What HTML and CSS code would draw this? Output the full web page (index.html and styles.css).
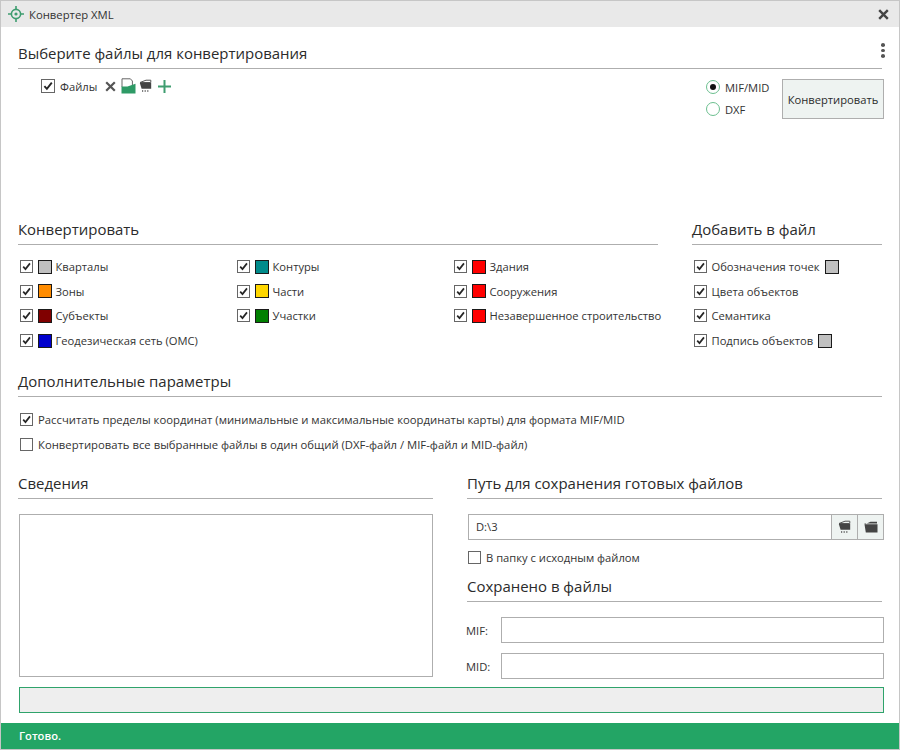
FILE: index.html
```html
<!DOCTYPE html>
<html lang="ru">
<head>
    <meta charset="UTF-8">
    <title>Конвертер XML</title>
    <link rel="stylesheet" href="styles.css">
</head>
<body>
    <svg class="defs" width="0" height="0">
        <symbol id="tick" viewBox="0 0 13 13">
            <path d="M2.6 6.6 5.3 9.6 10.6 2.8" fill="none" stroke="#262626" stroke-width="2"/>
        </symbol>
        <symbol id="folder-net" viewBox="0 0 13 14">
            <path d="M1 3.5 7 1.2 11.8 1.2V3.5Z" fill="none" stroke="#555" stroke-width="1"/>
            <path d="M.8 4H12.2V9.8H2.6Z" fill="#444"/>
            <path d="M3 12H4.2M5.6 12H6.8M8.2 12H9.4" stroke="#555" stroke-width="1.3"/>
        </symbol>
    </svg>

    <div class="window">
        <div class="titlebar">
            <svg class="app-icon" width="18" height="18" viewBox="0 0 18 18">
                <circle cx="9" cy="9" r="4.6" fill="none" stroke="#3f9d70" stroke-width="1.6"/>
                <circle cx="9" cy="9" r="1.6" fill="#3f9d70"/>
                <path d="M9 1V4.4M9 13.6V17M1 9H4.4M13.6 9H17" stroke="#3f9d70" stroke-width="1.6"/>
            </svg>
            <span class="app-title">Конвертер XML</span>
            <svg class="close" width="11" height="11" viewBox="0 0 11 11">
                <path d="M1.2 1.2 9.8 9.8M9.8 1.2 1.2 9.8" stroke="#444" stroke-width="2.4"/>
            </svg>
        </div>

        <div class="content">
            <div class="section-title title-top">
                Выберите файлы для конвертирования
                <span class="dots"><i></i><i></i><i></i></span>
            </div>

            <div class="files">
                <div class="file-tools">
                    <span class="check big"><svg><use href="#tick"/></svg></span>
                    <span class="file-label">Файлы</span>
                    <svg class="tool-x" width="11" height="11" viewBox="0 0 11 11">
                        <path d="M1.2 1.2 9.8 9.8M9.8 1.2 1.2 9.8" stroke="#555" stroke-width="2.2"/>
                    </svg>
                    <svg class="tool-open" width="15" height="16" viewBox="0 0 15 16">
                        <path d="M1 9V.8H9.4L11.4 3V7" fill="none" stroke="#666" stroke-width="1"/>
                        <path d="M.5 8.6H6.5L14.5 5.8V15.5H.5Z" fill="#2e9a66"/>
                    </svg>
                    <svg class="tool-net" width="13" height="14"><use href="#folder-net"/></svg>
                    <svg class="tool-plus" width="13" height="13" viewBox="0 0 13 13">
                        <path d="M6.5 0V13M0 6.5H13" stroke="#3f9d70" stroke-width="2"/>
                    </svg>
                </div>
                <div class="format">
                    <label class="radio-row"><span class="radio on"></span>MIF/MID</label>
                    <label class="radio-row"><span class="radio"></span>DXF</label>
                </div>
                <button type="button" class="btn-convert">Конвертировать</button>
            </div>

            <div class="options">
                <div>
                    <div class="section-title">Конвертировать</div>
                    <div class="layers">
                        <div class="row"><span class="check"><svg><use href="#tick"/></svg></span><span class="swatch gray"></span>Кварталы</div>
                        <div class="row"><span class="check"><svg><use href="#tick"/></svg></span><span class="swatch teal"></span>Контуры</div>
                        <div class="row"><span class="check"><svg><use href="#tick"/></svg></span><span class="swatch red"></span>Здания</div>
                        <div class="row"><span class="check"><svg><use href="#tick"/></svg></span><span class="swatch orange"></span>Зоны</div>
                        <div class="row"><span class="check"><svg><use href="#tick"/></svg></span><span class="swatch yellow"></span>Части</div>
                        <div class="row"><span class="check"><svg><use href="#tick"/></svg></span><span class="swatch red"></span>Сооружения</div>
                        <div class="row"><span class="check"><svg><use href="#tick"/></svg></span><span class="swatch maroon"></span>Субъекты</div>
                        <div class="row"><span class="check"><svg><use href="#tick"/></svg></span><span class="swatch green"></span>Участки</div>
                        <div class="row"><span class="check"><svg><use href="#tick"/></svg></span><span class="swatch red"></span>Незавершенное строительство</div>
                        <div class="row wide"><span class="check"><svg><use href="#tick"/></svg></span><span class="swatch blue"></span>Геодезическая сеть (ОМС)</div>
                    </div>
                </div>
                <div>
                    <div class="section-title">Добавить в файл</div>
                    <div class="extras">
                        <div class="row"><span class="check"><svg><use href="#tick"/></svg></span>Обозначения точек<span class="swatch gray after"></span></div>
                        <div class="row"><span class="check"><svg><use href="#tick"/></svg></span>Цвета объектов</div>
                        <div class="row"><span class="check"><svg><use href="#tick"/></svg></span>Семантика</div>
                        <div class="row"><span class="check"><svg><use href="#tick"/></svg></span>Подпись объектов<span class="swatch gray after"></span></div>
                    </div>
                </div>
            </div>

            <div class="section-title title-extra">Дополнительные параметры</div>
            <div class="params">
                <div class="row"><span class="check"><svg><use href="#tick"/></svg></span>Рассчитать пределы координат (минимальные и максимальные координаты карты) для формата MIF/MID</div>
                <div class="row"><span class="check"></span>Конвертировать все выбранные файлы в один общий (DXF-файл / MIF-файл и MID-файл)</div>
            </div>

            <div class="bottom">
                <div>
                    <div class="section-title">Сведения</div>
                    <div class="info-box"></div>
                </div>
                <div>
                    <div class="section-title">Путь для сохранения готовых файлов</div>
                    <div class="path">
                        <div class="path-value">D:\3</div>
                        <div class="path-btn"><svg width="13" height="14"><use href="#folder-net"/></svg></div>
                        <div class="path-btn">
                            <svg width="14" height="12" viewBox="0 0 14 12">
                                <path d="M.5 3.5 6.5.8H13V2.6H.5ZM.5 3.2H13.5V11.5H1.8Z" fill="#444"/>
                            </svg>
                        </div>
                    </div>
                    <div class="row same-folder"><span class="check"></span>В папку с исходным файлом</div>
                    <div class="section-title title-saved">Сохранено в файлы</div>
                    <div class="saved-row mif"><span class="saved-label">MIF:</span><div class="saved-input"></div></div>
                    <div class="saved-row mid"><span class="saved-label">MID:</span><div class="saved-input"></div></div>
                </div>
            </div>

            <div class="progress"></div>
        </div>

        <div class="status">Готово.</div>
    </div>
</body>
</html>
```

FILE: styles.css
```css
* {
    box-sizing: border-box;
}

body {
    margin: 0;
    background-color: #fff;
    font-family: "Open Sans", "Noto Sans", sans-serif;
    font-size: 11.2px;
    color: #333;
}

.defs {
    position: absolute;
}

.window {
    display: flex;
    flex-direction: column;
    width: 900px;
    height: 750px;
    border: 1px solid #c6c6c6;
    overflow: hidden;
}

.titlebar {
    display: flex;
    align-items: center;
    height: 26px;
    padding: 0 10px 0 6px;
    background-color: #e9e9e9;
    flex-shrink: 0;
}

.app-title {
    margin-left: 4px;
    font-size: 11.3px;
}

.close {
    margin-left: auto;
}

.content {
    padding: 15px 17px 0 17px;
}

.section-title {
    position: relative;
    height: 27px;
    border-bottom: 1px solid #aeaeae;
    font-size: 14.96px;
    line-height: 22px;
    color: #2b2b2b;
}

.dots {
    position: absolute;
    right: -3px;
    top: 1px;
    display: flex;
    flex-direction: column;
    gap: 2px;
}

.dots i {
    width: 4px;
    height: 3.5px;
    border-radius: 50%;
    background-color: #555;
}

.files {
    display: flex;
    align-items: flex-start;
    height: 149px;
    padding-top: 10px;
}

.file-tools {
    display: flex;
    align-items: center;
    height: 14px;
    margin-left: 23px;
}

.file-label {
    margin-left: 5px;
}

.tool-x {
    margin-left: 8px;
}

.tool-open {
    margin-left: 5px;
}

.tool-net {
    margin-left: 3px;
}

.tool-plus {
    margin-left: 6px;
}

.format {
    margin-left: auto;
    display: flex;
    flex-direction: column;
    gap: 6px;
    margin-right: 10px;
    width: 66px;
}

.radio-row {
    display: flex;
    align-items: center;
    height: 16px;
    gap: 5px;
}

.radio {
    position: relative;
    width: 14px;
    height: 14px;
    border: 1px solid #6cbf8f;
    border-radius: 50%;
    flex-shrink: 0;
}

.radio.on::after {
    content: "";
    position: absolute;
    left: 3px;
    top: 3px;
    width: 6px;
    height: 6px;
    border-radius: 50%;
    background-color: #111;
}

.btn-convert {
    width: 102px;
    height: 40px;
    margin-right: -2px;
    padding: 0;
    background-color: #eef3f1;
    border: 1px solid #aeaeae;
    font-family: inherit;
    font-size: 11.2px;
    color: #2b2b2b;
}

.options {
    display: grid;
    grid-template-columns: 640px 190px;
    gap: 34px;
}

.layers {
    display: grid;
    grid-template-columns: repeat(3, 217px);
    margin-top: 9.5px;
    width: 640px;
}

.extras {
    margin-top: 9.5px;
}

.row {
    display: flex;
    align-items: center;
    height: 24.6px;
    padding-left: 1.5px;
    white-space: nowrap;
}

.wide {
    grid-column: span 3;
}

.check {
    display: block;
    width: 13px;
    height: 13px;
    margin-right: 5px;
    border: 1px solid #666;
    background-color: #fff;
    flex-shrink: 0;
}

.check svg {
    display: block;
    width: 11px;
    height: 11px;
}

.check.big {
    width: 14px;
    height: 14px;
    margin-right: 0;
}

.check.big svg {
    width: 12px;
    height: 12px;
}

.swatch {
    width: 14px;
    height: 14px;
    margin-right: 4px;
    border: 1px solid #1a1a1a;
    flex-shrink: 0;
}

.swatch.after {
    margin: 0 0 0 5px;
}

.gray { background-color: #c0c0c0; }
.teal { background-color: #008b8b; }
.red { background-color: #ff0000; }
.orange { background-color: #ff8c00; }
.yellow { background-color: #ffd700; }
.maroon { background-color: #800000; }
.green { background-color: #008000; }
.blue { background-color: #0000cd; }

.title-extra {
    margin-top: 17.5px;
}

.params {
    margin-top: 10px;
    font-size: 11.3px;
}

.params .row {
    height: 25px;
    padding-left: 2px;
}

.bottom {
    display: grid;
    grid-template-columns: 415px 415px;
    gap: 34px;
    margin-top: 15px;
}

.info-box {
    height: 163px;
    margin: 15px 0 0 1px;
    border: 1px solid #aeaeae;
}

.path {
    display: flex;
    height: 26px;
    margin: 15px -2px 0 1px;
    border: 1px solid #aeaeae;
}

.path-value {
    flex: 1;
    padding-left: 7px;
    line-height: 24px;
}

.path-btn {
    display: flex;
    align-items: center;
    justify-content: center;
    width: 26px;
    background-color: #eef3f1;
    border-left: 1px solid #aeaeae;
}

.same-folder {
    height: 18px;
    margin-top: 8px;
    padding-left: 1px;
}

.title-saved {
    margin-top: 9px;
}

.saved-row {
    display: flex;
    align-items: center;
    height: 26px;
    margin-right: -2px;
}

.mif {
    margin-top: 15px;
}

.mid {
    margin-top: 10px;
}

.saved-label {
    width: 35px;
    margin-left: -1px;
}

.saved-input {
    flex: 1;
    height: 26px;
    border: 1px solid #aeaeae;
}

.progress {
    height: 26px;
    margin: 8px -2px 0 1px;
    background-color: #eee;
    border: 1px solid #2fa36b;
}

.status {
    margin-top: auto;
    height: 26px;
    padding-left: 18px;
    background-color: #23a565;
    color: #fff;
    font-weight: 600;
    line-height: 26px;
}
```
